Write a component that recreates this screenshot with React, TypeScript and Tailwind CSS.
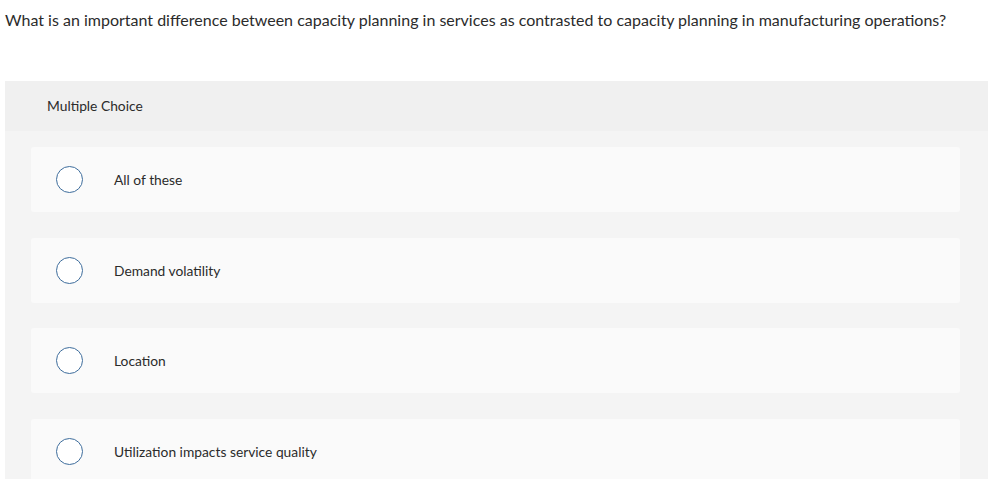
import React from 'react';

const options = ['All of these', 'Demand volatility', 'Location', 'Utilization impacts service quality'];

const App: React.FC = () => {
  return (
    <div className="w-[1004px] h-[479px] overflow-hidden bg-white text-[#2b2b2b]" style={{ fontFamily: 'Lato, "Liberation Sans", sans-serif' }}>
      {/* Question */}
      <p className="pl-[5px] pt-[10px] text-[16px] leading-[19px]">
        What is an important difference between capacity planning in services as contrasted to capacity planning in manufacturing operations?
      </p>

      {/* Answer panel */}
      <div className="ml-[5px] mt-[52px] w-[983px] bg-[#f4f4f4]">
        <div className="h-[50px] bg-[#f0f0f0] pl-[42px] flex items-center text-[13.8px]">Multiple Choice</div>
        <div className="px-[26px] pt-[16px] pb-[10px] flex flex-col gap-[25.5px]">
          {options.map((opt) => (
            <div key={opt} className="h-[65px] w-[929px] bg-[#fafafa] rounded-[3px] flex items-center pl-[25px]">
              <span className="w-[27px] h-[27px] rounded-full border-[1.5px] border-[#3e6d9c] bg-white shrink-0" />
              <span className="ml-[31px] mt-[2px] text-[13.8px]">{opt}</span>
            </div>
          ))}
        </div>
      </div>
    </div>
  );
};

export default App;
